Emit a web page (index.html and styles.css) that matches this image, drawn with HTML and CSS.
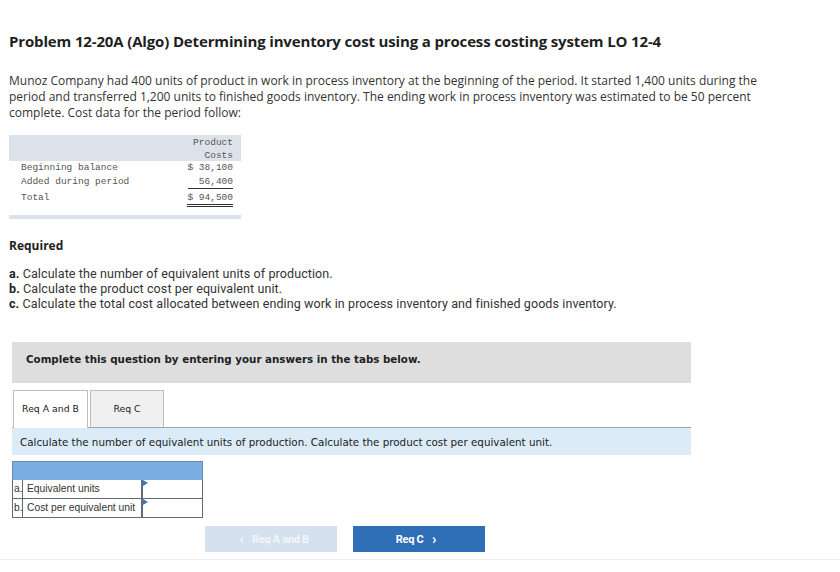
FILE: index.html
```html
<!DOCTYPE html>
<html>
<head>
<meta charset="utf-8">
<link rel="stylesheet" href="styles.css">
</head>
<body>
<div class="page">
  <h1 class="title">Problem 12-20A (Algo) Determining inventory cost using a process costing system LO 12-4</h1>
  <p class="intro">Munoz Company had 400 units of product in work in process inventory at the beginning of the period. It started 1,400 units during the period and transferred 1,200 units to finished goods inventory. The ending work in process inventory was estimated to be 50 percent complete. Cost data for the period follow:</p>

  <div class="costs">
    <div class="costs-head">
      <span></span>
      <span class="amt">Product<br>Costs</span>
    </div>
    <div class="costs-row">
      <span>Beginning balance</span>
      <span class="amt">$ 38,100</span>
    </div>
    <div class="costs-row">
      <span>Added during period</span>
      <span class="amt single">56,400</span>
    </div>
    <div class="costs-row total">
      <span>Total</span>
      <span class="amt double">$ 94,500</span>
    </div>
    <div class="costs-foot"></div>
  </div>

  <h2 class="req-title">Required</h2>
  <ol class="req-list">
    <li><b>a.</b> Calculate the number of equivalent units of production.</li>
    <li><b>b.</b> Calculate the product cost per equivalent unit.</li>
    <li><b>c.</b> Calculate the total cost allocated between ending work in process inventory and finished goods inventory.</li>
  </ol>

  <div class="question">
    <div class="notice">Complete this question by entering your answers in the tabs below.</div>
    <div class="tabs">
      <div class="tab active">Req A and B</div>
      <div class="tab">Req C</div>
    </div>
    <div class="instruction">Calculate the number of equivalent units of production. Calculate the product cost per equivalent unit.</div>

    <div class="answers">
      <div class="answers-head"></div>
      <div class="answer-row">
        <span class="ltr">a.</span>
        <span class="lbl">Equivalent units</span>
        <span class="inp"><i class="flag"></i></span>
      </div>
      <div class="answer-row">
        <span class="ltr">b.</span>
        <span class="lbl">Cost per equivalent unit</span>
        <span class="inp"><i class="flag"></i></span>
      </div>
    </div>

    <div class="nav">
      <button class="btn btn-prev"><span class="chev">&lsaquo;</span> Req A and B</button>
      <button class="btn btn-next">Req C <span class="chev">&rsaquo;</span></button>
    </div>
  </div>
  <div class="bottom-line"></div>
</div>
</body>
</html>
```

FILE: styles.css
```css
* { box-sizing: border-box; }
html, body { margin: 0; padding: 0; background: #fff; }
body { font-family: "Open Sans", "Liberation Sans", sans-serif; color: #2b2b2b; }

.page { padding: 31px 0 0 9px; width: 840px; }

.title {
  margin: 0;
  font-size: 15px;
  line-height: 20px;
  font-weight: 700;
  color: #1f1f1f;
  letter-spacing: -0.15px;
}

.intro {
  margin: 22px 0 0;
  width: 760px;
  font-size: 12px;
  line-height: 16px;
  color: #333;
}

.costs {
  margin-top: 14px;
  width: 232px;
  font-family: "Liberation Mono", "DejaVu Sans Mono", monospace;
  font-size: 9.5px;
  color: #555;
}
.costs-head {
  display: flex;
  justify-content: space-between;
  background: #dde2ea;
  padding: 1px 8px 0 12px;
  line-height: 13px;
  height: 26px;
  text-align: right;
}
.costs-row {
  display: flex;
  justify-content: space-between;
  padding: 0 8px 0 12px;
  line-height: 13px;
  height: 14px;
}
.costs-row.total { margin-top: 2px; height: 16px; line-height: 14px; }
.amt { text-align: right; min-width: 45px; }
.single { border-bottom: 1px solid #333; }
.double { border-bottom: 3px double #333; }
.costs-foot { margin-top: 8px; height: 4px; background: #dde2ea; }

.req-title {
  margin: 19px 0 0;
  font-size: 12px;
  line-height: 16px;
  font-weight: 700;
  color: #222;
}
.req-list {
  list-style: none;
  margin: 12px 0 0;
  padding: 0;
  font-family: Roboto, "Open Sans", sans-serif;
  font-size: 12.5px;
  letter-spacing: 0.1px;
  line-height: 15px;
  color: #333;
}
.req-list li { height: 15px; }
.req-list b { color: #222; }

.question { margin: 31px 0 0 3px; width: 679px; font-family: "DejaVu Sans", Verdana, sans-serif; }
.notice {
  background: #dedede;
  height: 41px;
  padding: 10px 0 0 14px;
  font-size: 10.3px;
  font-weight: 700;
  line-height: 15px;
  color: #222;
}
.tabs { display: flex; gap: 2px; margin-top: 7px; padding-left: 1px; }
.tab {
  width: 74px;
  height: 37px;
  border: 1px solid #bdbdbd;
  border-bottom: none;
  background: #f0f0f0;
  font-size: 9.3px;
  line-height: 36px;
  text-align: center;
  color: #222;
}
.tab.active { background: #fff; position: relative; z-index: 1; height: 38px; margin-bottom: -1px; width: 75px; }

.instruction {
  background: #dbebf8;
  border-top: 1px solid #9aa5ae;
  height: 28px;
  padding: 6px 0 0 8px;
  font-size: 10.35px;
  line-height: 16px;
  color: #222;
}

.answers {
  margin-top: 6px;
  width: 191px;
  font-family: "Liberation Sans", Arial, sans-serif;
  font-size: 10.3px;
  color: #333;
}
.answers-head { height: 19px; background: #7aade2; border: 1px solid #6a8bb0; border-bottom: none; }
.answer-row {
  display: flex;
  height: 19px;
  border: 1px solid #5f6b78;
  border-top: none;
}
.answer-row:first-of-type { border-top: 1px solid #5f6b78; }
.ltr { width: 10px; border-right: 1px solid #5f6b78; padding-left: 1px; line-height: 18px; }
.lbl { width: 120px; padding-left: 4px; line-height: 18px; border-right: 2px solid #5f6b78; white-space: nowrap; }
.inp { flex: 1; position: relative; }
.flag {
  position: absolute; left: 0; top: 0;
  width: 0; height: 0;
  border-left: 5px solid #3a78c0;
  border-top: 3px solid transparent;
  border-bottom: 3px solid transparent;
}

.nav { display: flex; gap: 16px; margin: 8px 0 0 193px; }
.btn {
  width: 132px;
  height: 26px;
  border: none;
  font-family: Roboto, "Liberation Sans", sans-serif;
  font-size: 11px;
  font-weight: 700;
  color: #fff;
  letter-spacing: -0.3px;
  padding: 0;
}
.btn-prev { background: #d5e1ef; color: #f3f6fa; }
.btn-next { background: #2f6fb8; }
.chev { font-size: 15px; font-weight: 700; line-height: 10px; margin: 0 6px; position: relative; top: 1px; }

.bottom-line { margin: 7px 0 0 -9px; height: 1px; background: #ececec; width: 840px; }
```
